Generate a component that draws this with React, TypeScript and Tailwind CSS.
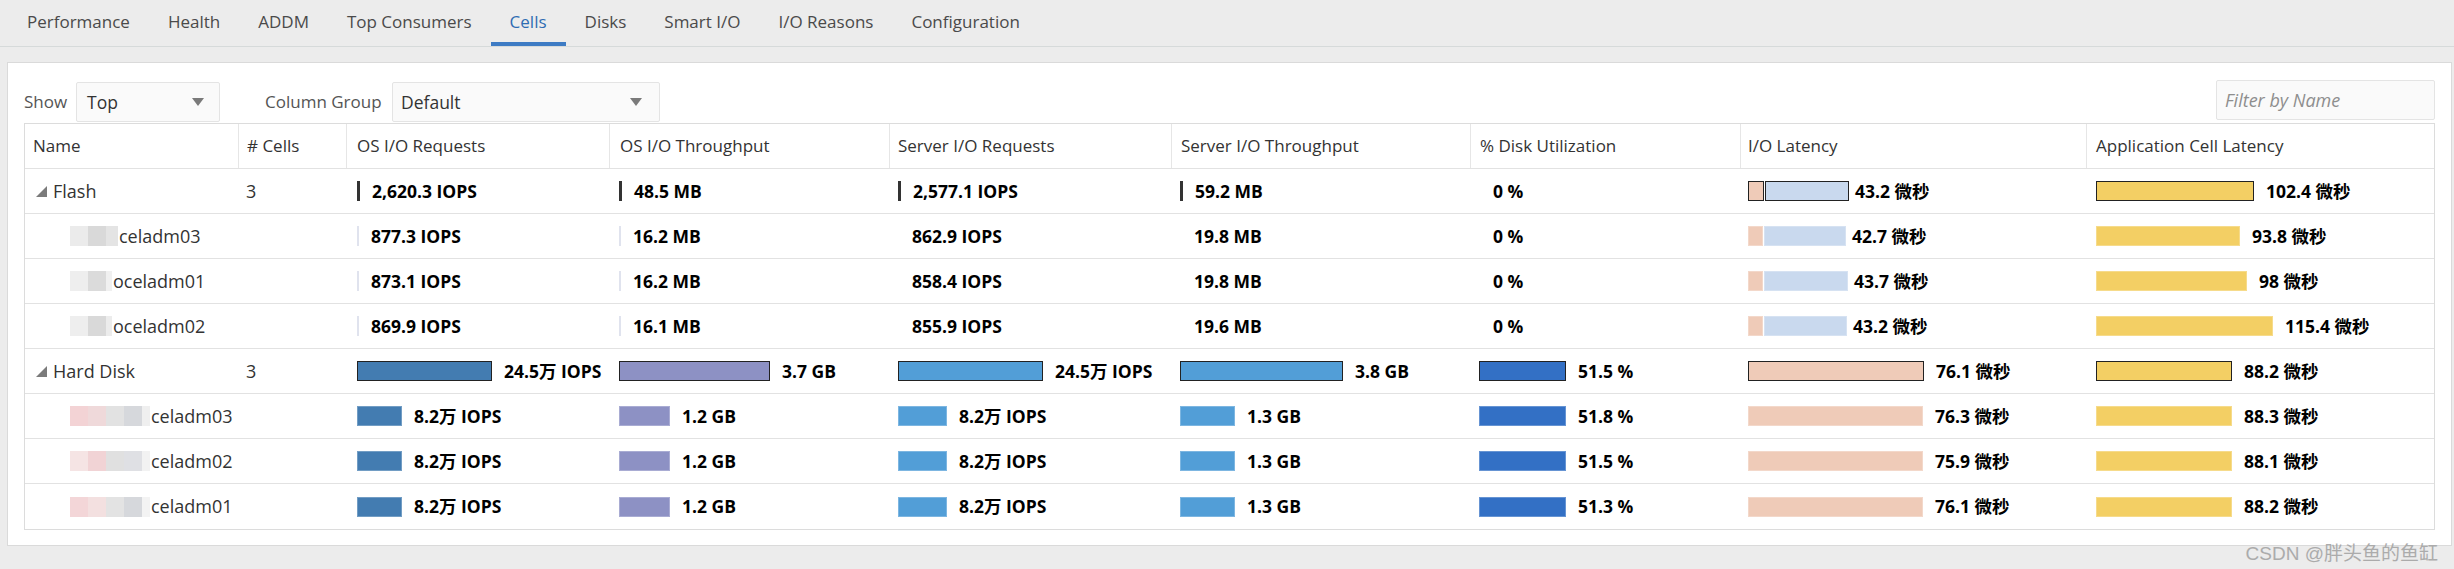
import React from 'react';

type Marker = 'dark' | 'light' | 'none';
type Bar = { w?: number; segs?: [number, number]; marker?: Marker; text: string; gap?: 'sm' };
type Row = {
  kind: 'total' | 'child';
  name: string;
  count?: string;
  mosaic?: string[];
  bars: Bar[];
};

const COLS = 'grid grid-cols-[214px_108px_263px_280px_282px_299px_270px_346px_348px]';

const barBg = [
  'bg-[#437cb1]',
  'bg-[#8d91c4]',
  'bg-[#529ed7]',
  'bg-[#529ed7]',
  'bg-[#3370c5]',
  'bg-[#efcbb8]',
  'bg-[#f3cf64]',
];
const cellPad = ['pl-[10px]', 'pl-[9px]', 'pl-[8px]', 'pl-[8px]', 'pl-[8px]', 'pl-[7px]', 'pl-[9px]'];

const tabs = ['Performance', 'Health', 'ADDM', 'Top Consumers', 'Cells', 'Disks', 'Smart I/O', 'I/O Reasons', 'Configuration'];

const headers: { label: string; pad: string }[] = [
  { label: 'Name', pad: 'pl-[8px]' },
  { label: '# Cells', pad: 'pl-[8px]' },
  { label: 'OS I/O Requests', pad: 'pl-[10px]' },
  { label: 'OS I/O Throughput', pad: 'pl-[10px]' },
  { label: 'Server I/O Requests', pad: 'pl-[8px]' },
  { label: 'Server I/O Throughput', pad: 'pl-[9px]' },
  { label: '% Disk Utilization', pad: 'pl-[9px]' },
  { label: 'I/O Latency', pad: 'pl-[7px]' },
  { label: 'Application Cell Latency', pad: 'pl-[9px]' },
];

const rows: Row[] = [
  {
    kind: 'total',
    name: 'Flash',
    count: '3',
    bars: [
      { marker: 'dark', text: '2,620.3 IOPS' },
      { marker: 'dark', text: '48.5 MB' },
      { marker: 'dark', text: '2,577.1 IOPS' },
      { marker: 'dark', text: '59.2 MB' },
      { marker: 'none', text: '0 %' },
      { segs: [16, 84], text: '43.2 微秒', gap: 'sm' },
      { w: 158, text: '102.4 微秒' },
    ],
  },
  {
    kind: 'child',
    name: 'celadm03',
    mosaic: ['w-[18px] bg-[#ebebeb]', 'w-[18px] bg-[#d9d9d9]', 'w-[12px] bg-[#e4e4e4]'],
    bars: [
      { marker: 'light', text: '877.3 IOPS' },
      { marker: 'light', text: '16.2 MB' },
      { marker: 'none', text: '862.9 IOPS' },
      { marker: 'none', text: '19.8 MB' },
      { marker: 'none', text: '0 %' },
      { segs: [15, 82], text: '42.7 微秒', gap: 'sm' },
      { w: 144, text: '93.8 微秒' },
    ],
  },
  {
    kind: 'child',
    name: 'oceladm01',
    mosaic: ['w-[18px] bg-[#eeeeee]', 'w-[18px] bg-[#dbdbdb]', 'w-[6px] bg-[#f0f0f0]'],
    bars: [
      { marker: 'light', text: '873.1 IOPS' },
      { marker: 'light', text: '16.2 MB' },
      { marker: 'none', text: '858.4 IOPS' },
      { marker: 'none', text: '19.8 MB' },
      { marker: 'none', text: '0 %' },
      { segs: [15, 84], text: '43.7 微秒', gap: 'sm' },
      { w: 151, text: '98 微秒' },
    ],
  },
  {
    kind: 'child',
    name: 'oceladm02',
    mosaic: ['w-[18px] bg-[#eeeeee]', 'w-[18px] bg-[#d9d9d9]', 'w-[6px] bg-[#ececec]'],
    bars: [
      { marker: 'light', text: '869.9 IOPS' },
      { marker: 'light', text: '16.1 MB' },
      { marker: 'none', text: '855.9 IOPS' },
      { marker: 'none', text: '19.6 MB' },
      { marker: 'none', text: '0 %' },
      { segs: [15, 83], text: '43.2 微秒', gap: 'sm' },
      { w: 177, text: '115.4 微秒' },
    ],
  },
  {
    kind: 'total',
    name: 'Hard Disk',
    count: '3',
    bars: [
      { w: 135, text: '24.5万 IOPS' },
      { w: 151, text: '3.7 GB' },
      { w: 145, text: '24.5万 IOPS' },
      { w: 163, text: '3.8 GB' },
      { w: 87, text: '51.5 %' },
      { w: 176, text: '76.1 微秒' },
      { w: 136, text: '88.2 微秒' },
    ],
  },
  {
    kind: 'child',
    name: 'celadm03',
    mosaic: [
      'w-[18px] bg-[#f3d3d5]',
      'w-[18px] bg-[#efd9da]',
      'w-[18px] bg-[#e2e2e2]',
      'w-[18px] bg-[#d6d8dc]',
      'w-[8px] bg-[#efefef]',
    ],
    bars: [
      { w: 45, text: '8.2万 IOPS' },
      { w: 51, text: '1.2 GB' },
      { w: 49, text: '8.2万 IOPS' },
      { w: 55, text: '1.3 GB' },
      { w: 87, text: '51.8 %' },
      { w: 175, text: '76.3 微秒' },
      { w: 136, text: '88.3 微秒' },
    ],
  },
  {
    kind: 'child',
    name: 'celadm02',
    mosaic: [
      'w-[18px] bg-[#f5e4e4]',
      'w-[18px] bg-[#f1d3d5]',
      'w-[18px] bg-[#e0e0e0]',
      'w-[18px] bg-[#dfe0e4]',
      'w-[8px] bg-[#f2f2f2]',
    ],
    bars: [
      { w: 45, text: '8.2万 IOPS' },
      { w: 51, text: '1.2 GB' },
      { w: 49, text: '8.2万 IOPS' },
      { w: 55, text: '1.3 GB' },
      { w: 87, text: '51.5 %' },
      { w: 175, text: '75.9 微秒' },
      { w: 136, text: '88.1 微秒' },
    ],
  },
  {
    kind: 'child',
    name: 'celadm01',
    mosaic: [
      'w-[18px] bg-[#f3d6d8]',
      'w-[18px] bg-[#f3e0e0]',
      'w-[18px] bg-[#e3e3e3]',
      'w-[18px] bg-[#d6d8dc]',
      'w-[8px] bg-[#f3f3f3]',
    ],
    bars: [
      { w: 45, text: '8.2万 IOPS' },
      { w: 51, text: '1.2 GB' },
      { w: 49, text: '8.2万 IOPS' },
      { w: 55, text: '1.3 GB' },
      { w: 87, text: '51.3 %' },
      { w: 175, text: '76.1 微秒' },
      { w: 136, text: '88.2 微秒' },
    ],
  },
];

function Caret() {
  return (
    <svg width="12" height="8" viewBox="0 0 12 8" className="shrink-0">
      <polygon points="0,0 12,0 6,8" fill="#7a7a7a" />
    </svg>
  );
}

function TreeArrow() {
  return (
    <svg width="11" height="11" viewBox="0 0 11 11" className="shrink-0">
      <polygon points="11,0 11,11 0,11" fill="#7b7b7b" />
    </svg>
  );
}

function BarCell({ bar, col, total }: { bar: Bar; col: number; total: boolean }) {
  const edge = total ? 'border border-[#222]' : 'border border-white/25';
  let graphic: React.ReactNode;
  if (bar.segs) {
    graphic = (
      <div className="flex gap-[1px] shrink-0">
        <div className={`h-[20px] bg-[#efcbb8] ${edge}`} style={{ width: bar.segs[0] }} />
        <div className={`h-[20px] bg-[#c9d9ee] ${edge}`} style={{ width: bar.segs[1] }} />
      </div>
    );
  } else if (bar.w) {
    graphic = <div className={`h-[20px] shrink-0 ${barBg[col]} ${edge}`} style={{ width: bar.w }} />;
  } else if (bar.marker === 'dark') {
    graphic = <div className="h-[20px] w-[3px] shrink-0 bg-[#333]" />;
  } else if (bar.marker === 'light') {
    graphic = <div className="h-[20px] w-[2px] shrink-0 bg-[#e0e3ee]" />;
  } else {
    graphic = <div className="h-[20px] w-[2px] shrink-0" />;
  }
  return (
    <div className={`flex items-center ${cellPad[col]}`}>
      {graphic}
      <span className={`${bar.gap === 'sm' ? 'ml-[6px]' : 'ml-[12px]'} whitespace-nowrap font-bold text-[17.5px] text-black`}>
        {bar.text}
      </span>
    </div>
  );
}

export default function App() {
  return (
    <div className="relative w-[2454px] h-[569px] overflow-hidden bg-[#ececec] font-['Open_Sans','Noto_Sans_CJK_SC',sans-serif] text-[#333]">
      {/* Tabs */}
      <div className="flex h-[47px] border-b border-[#d6dada] pl-[8px]">
        {tabs.map((t) => (
          <div
            key={t}
            className={
              t === 'Cells'
                ? 'flex items-center h-[46px] pb-[3px] px-[19px] text-[17px] text-[#2f6cb3] shadow-[inset_0_-4px_0_#3d7bc4]'
                : 'flex items-center h-[46px] pb-[3px] px-[19px] text-[17px] text-[#4a4a4a]'
            }
          >
            {t}
          </div>
        ))}
      </div>

      {/* Panel */}
      <div className="mt-[15px] ml-[7px] mr-[2px] h-[484px] bg-white border border-[#dadada] px-[16px] pt-[19px]">
        {/* Toolbar */}
        <div className="flex items-start h-[41px]">
          <div className="w-[52px] h-[40px] flex items-center text-[17px] text-[#555]">Show</div>
          <div className="w-[144px] h-[40px] flex items-center justify-between pl-[10px] pr-[15px] bg-[#fafafa] border border-[#e4e4e4] rounded-[2px] text-[17.5px] text-[#333]">
            <span>Top</span>
            <Caret />
          </div>
          <div className="ml-[45px] w-[127px] h-[40px] flex items-center text-[17px] text-[#555]">Column Group</div>
          <div className="w-[268px] h-[40px] flex items-center justify-between pl-[8px] pr-[17px] bg-[#fafafa] border border-[#e4e4e4] rounded-[2px] text-[17.5px] text-[#333]">
            <span>Default</span>
            <Caret />
          </div>
          <div className="ml-auto -mt-[2px] w-[219px] h-[40px] flex items-center pl-[8px] bg-[#fafafa] border border-[#e4e4e4] rounded-[2px] text-[18px] italic text-[#8e8e8e]">
            Filter by Name
          </div>
        </div>

        {/* Table */}
        <div className="border border-[#dcdcdc]">
          <div className={`${COLS} h-[45px] border-b border-[#e2e2e2]`}>
            {headers.map((h, i) => (
              <div
                key={h.label}
                className={`flex items-center ${h.pad} text-[17px] text-[#333] whitespace-nowrap ${
                  i < headers.length - 1 ? 'border-r border-[#e6e6e6]' : ''
                }`}
              >
                {h.label}
              </div>
            ))}
          </div>
          {rows.map((r, ri) => (
            <div
              key={ri}
              className={`${COLS} h-[45px] ${ri < rows.length - 1 ? 'border-b border-[#e2e2e2]' : ''}`}
            >
              {r.kind === 'total' ? (
                <div className="flex items-center pl-[11px] text-[18px] text-[#333]">
                  <TreeArrow />
                  <span className="ml-[6px]">{r.name}</span>
                </div>
              ) : (
                <div className="flex items-center pl-[45px] text-[18px] text-[#333]">
                  <div className="flex h-[20px]">
                    {r.mosaic!.map((m, mi) => (
                      <div key={mi} className={`h-[20px] ${m}`} />
                    ))}
                  </div>
                  <span className="ml-[1px]">{r.name}</span>
                </div>
              )}
              <div className="flex items-center pl-[7px] text-[18px] text-[#333]">{r.count ?? ''}</div>
              {r.bars.map((b, bi) => (
                <BarCell key={bi} bar={b} col={bi} total={r.kind === 'total'} />
              ))}
            </div>
          ))}
        </div>
      </div>

      <div className="absolute right-[16px] bottom-[6px] text-[19px] leading-none text-[#ababab] font-['Liberation_Sans','Noto_Sans_CJK_SC',sans-serif]">
        CSDN @胖头鱼的鱼缸
      </div>
    </div>
  );
}
